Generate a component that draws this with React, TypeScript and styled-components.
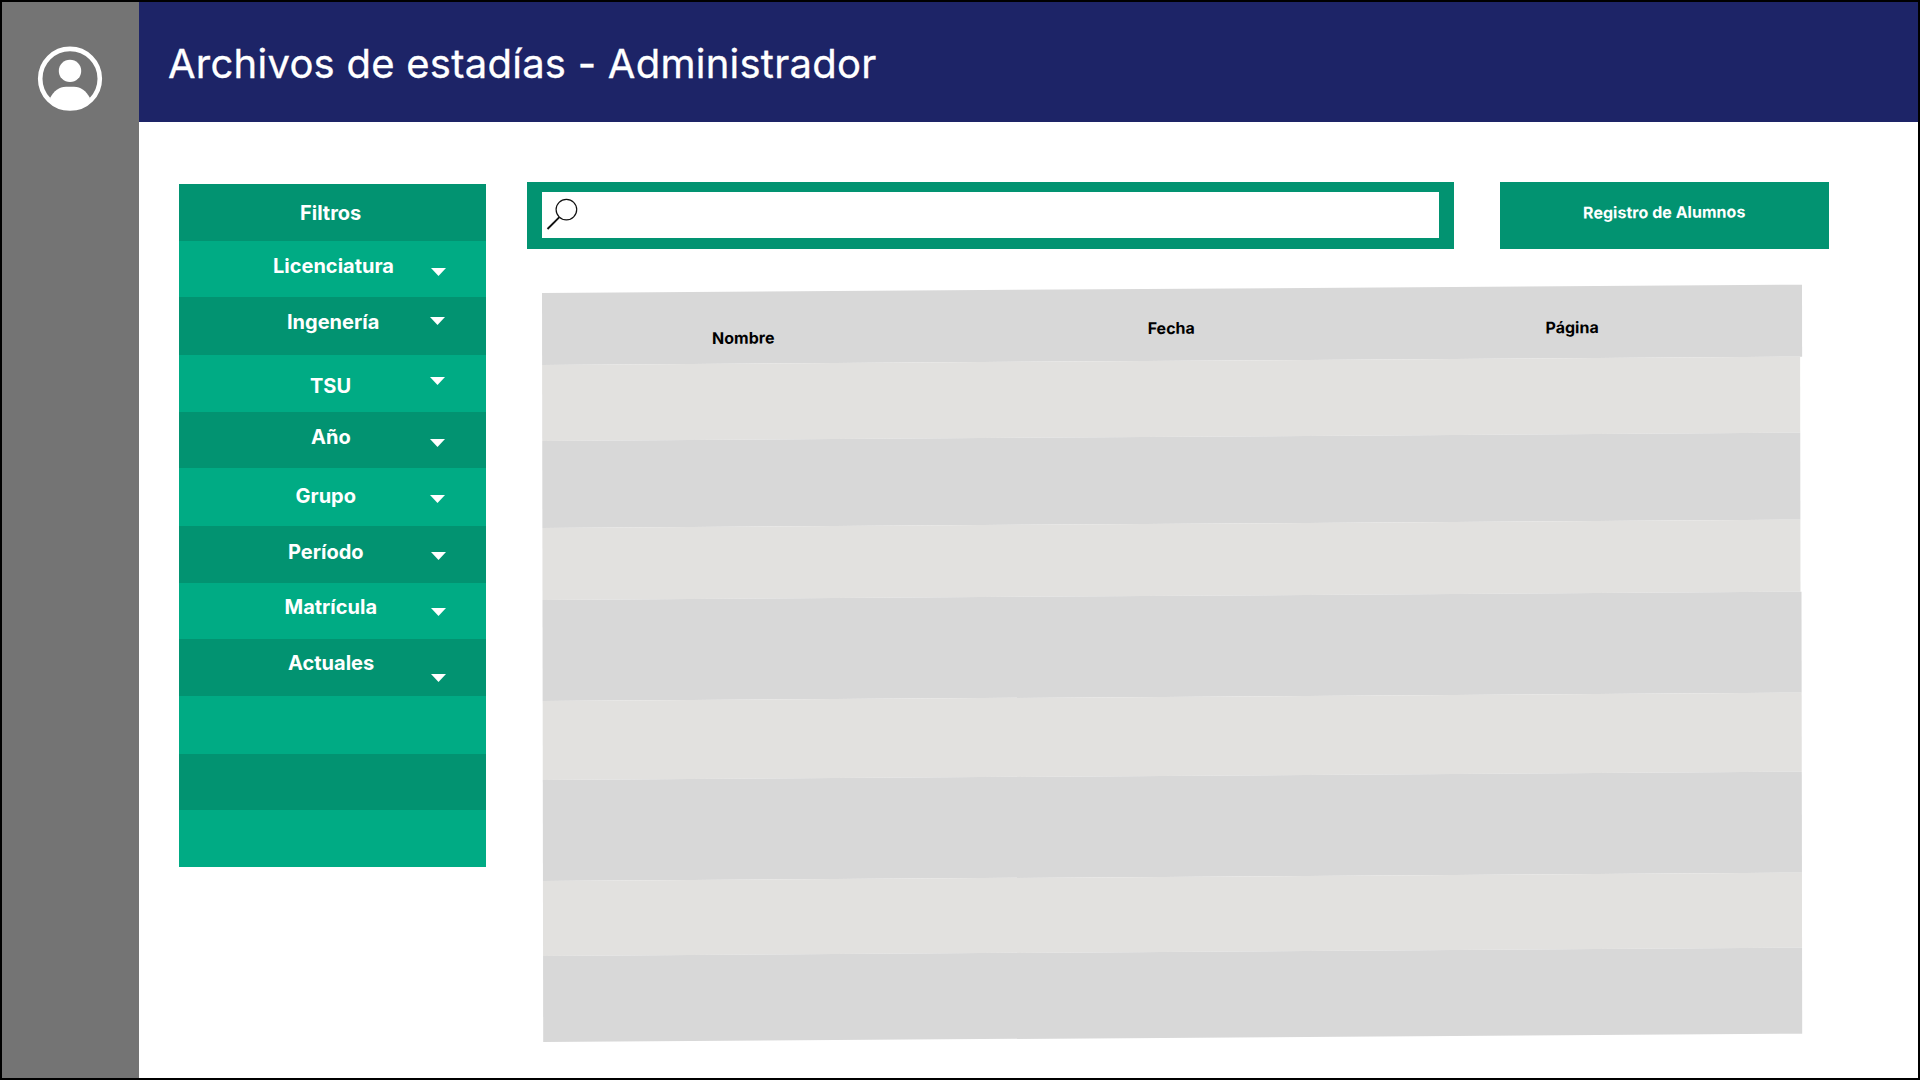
import React from "react";
import styled, { createGlobalStyle } from "styled-components";

const Global = createGlobalStyle`
  *, *::before, *::after { box-sizing: border-box; }
  body { margin: 0; background: #fff; font-family: Inter, "Liberation Sans", sans-serif; }
  h1, ul { margin: 0; padding: 0; }
`;

const Screen = styled.div`
  display: flex;
  width: 1920px;
  height: 1080px;
  border: 2px solid #000;
  background: #fff;
  overflow: hidden;
`;

const Sidebar = styled.aside`
  flex: none;
  width: 137px;
  padding: 44px 0 0 35px;
  background: #747474;
`;

const Avatar = styled.svg`
  display: block;
  width: 66px;
  height: 66px;
`;

const Main = styled.main`
  flex: 1;
  display: flex;
  flex-direction: column;
`;

const Header = styled.header`
  height: 120px;
  padding: 38px 0 0 29px;
  background: #1d2467;
`;

const Title = styled.h1`
  color: #fff;
  font-size: 40px;
  line-height: 48px;
  font-weight: 400;
  letter-spacing: 0.25px;
  -webkit-text-stroke: 0.3px #fff;
  white-space: nowrap;
`;

const Body = styled.div`
  display: flex;
  gap: 41px;
  padding: 60px 0 0 40px;
`;

const Filters = styled.ul`
  flex: none;
  width: 307px;
  margin-top: 2px;
  list-style: none;
`;

const FilterRow = styled.li<{ $height: number; $light: boolean }>`
  display: flex;
  align-items: flex-start;
  height: ${(p) => p.$height}px;
  background: ${(p) => (p.$light ? "#00ab84" : "#029371")};
`;

const FilterLabel = styled.span<{ $left: number; $top: number }>`
  flex: none;
  width: ${(p) => 251 - p.$left}px;
  margin: ${(p) => p.$top}px 0 0 ${(p) => p.$left}px;
  color: #fff;
  font-size: 20px;
  line-height: 24px;
  font-weight: 700;
  white-space: nowrap;
`;

const Caret = styled.i<{ $top: number; $shift: number }>`
  width: 15px;
  height: 8px;
  margin: ${(p) => p.$top}px 0 0 ${(p) => p.$shift}px;
  background: #fff;
  clip-path: polygon(0 0, 100% 0, 50% 100%);
`;

const Content = styled.section`
  display: flex;
  flex-direction: column;
`;

const Toolbar = styled.div`
  display: flex;
  gap: 46px;
`;

const SearchFrame = styled.div`
  width: 927px;
  height: 67px;
  padding: 10px 15px 11px;
  background: #029371;
`;

const SearchField = styled.div`
  height: 46px;
  padding: 6px 0 0 4px;
  background: #fff;
`;

const Magnifier = styled.svg`
  display: block;
  width: 34px;
  height: 34px;
`;

const RegisterButton = styled.button`
  display: flex;
  justify-content: center;
  width: 329px;
  height: 67px;
  padding: 21px 0 0;
  border: 0;
  background: #029371;
  color: #fff;
  font: 700 16px/19px Inter, "Liberation Sans", sans-serif;
  letter-spacing: 0.03px;
`;

const ButtonText = styled.span`
  height: 19px;
  transform: rotate(-0.38deg);
`;

const Table = styled.div`
  width: 1259.5px;
  margin: 44.3px 0 0 15px;
  transform: matrix(1, -0.0066, 0.0016, 1, 0, 0);
  transform-origin: 0 0;
`;

const TableRow = styled.div<{ $height: number; $light?: boolean; $inset?: number }>`
  display: flex;
  height: ${(p) => p.$height}px;
  width: ${(p) => 1259.5 - (p.$inset ?? 0)}px;
  background: ${(p) => (p.$light ? "#e2e1df" : "#d8d8d8")};
`;

const HeadCell = styled.span<{ $left: number; $top: number; $width: number }>`
  width: ${(p) => p.$width}px;
  margin: ${(p) => p.$top}px 0 0 ${(p) => p.$left}px;
  color: #000;
  font-size: 16px;
  line-height: 19px;
  font-weight: 700;
`;

type Filter = { height: number; label?: string; left?: number; top?: number; caret?: number; shift?: number };

const filters: Filter[] = [
  { height: 57, label: "Filtros", left: 121, top: 17 },
  { height: 56, label: "Licenciatura", left: 94, top: 13, caret: 27, shift: 1 },
  { height: 58, label: "Ingenería", left: 108, top: 13, caret: 20, shift: 0 },
  { height: 57, label: "TSU", left: 131, top: 19, caret: 22, shift: 0 },
  { height: 56, label: "Año", left: 132, top: 13, caret: 27, shift: 0 },
  { height: 58, label: "Grupo", left: 116.5, top: 16, caret: 27, shift: 0 },
  { height: 57, label: "Período", left: 109, top: 14, caret: 26, shift: 1 },
  { height: 56, label: "Matrícula", left: 105.5, top: 12, caret: 25, shift: 1 },
  { height: 57, label: "Actuales", left: 109, top: 12, caret: 35, shift: 1 },
  { height: 58 },
  { height: 56 },
  { height: 57 },
];

const rows = [
  { height: 76.7, inset: 1.5 },
  { height: 87, inset: 1.4 },
  { height: 72, inset: 1.3 },
  { height: 101, inset: 0.6 },
  { height: 79, inset: 0.8 },
  { height: 101, inset: 0.6 },
  { height: 75, inset: 0.8 },
  { height: 86, inset: 0.8 },
];

export default function App() {
  return (
    <>
      <Global />
      <Screen>
        <Sidebar>
          <Avatar viewBox="0 0 66 66">
            <circle cx="33" cy="32.7" r="29.8" fill="none" stroke="#fff" strokeWidth="4.6" />
            <circle cx="33" cy="24.9" r="11.2" fill="#fff" />
            <path d="M13 52C17 45 22 40.8 29 40.8H37C44 40.8 49 45 53 52C48 60 41 63 33 63S18 60 13 52Z" fill="#fff" />
          </Avatar>
        </Sidebar>
        <Main>
          <Header>
            <Title>Archivos de estadías - Administrador</Title>
          </Header>
          <Body>
            <Filters>
              {filters.map((f, i) => (
                <FilterRow key={i} $height={f.height} $light={i % 2 === 1}>
                  {f.label && <FilterLabel $left={f.left ?? 0} $top={f.top ?? 0}>{f.label}</FilterLabel>}
                  {f.caret !== undefined && <Caret $top={f.caret} $shift={f.shift ?? 0} />}
                </FilterRow>
              ))}
            </Filters>
            <Content>
              <Toolbar>
                <SearchFrame>
                  <SearchField>
                    <Magnifier viewBox="0 0 34 34" fill="none" stroke="#111">
                      <circle cx="20.4" cy="11.6" r="10.3" strokeWidth="1.2" />
                      <path d="M1.5 31L13.4 19.2" strokeWidth="1.9" />
                    </Magnifier>
                  </SearchField>
                </SearchFrame>
                <RegisterButton>
                  <ButtonText>Registro de Alumnos</ButtonText>
                </RegisterButton>
              </Toolbar>
              <Table>
                <TableRow $height={71.7}>
                  <HeadCell $left={170} $top={37} $width={435.6}>Nombre</HeadCell>
                  <HeadCell $left={0} $top={29.5} $width={397.9}>Fecha</HeadCell>
                  <HeadCell $left={0} $top={32} $width={80}>Página</HeadCell>
                </TableRow>
                {rows.map((r, i) => (
                  <TableRow key={i} $height={r.height} $light={i % 2 === 0} $inset={r.inset} />
                ))}
              </Table>
            </Content>
          </Body>
        </Main>
      </Screen>
    </>
  );
}
